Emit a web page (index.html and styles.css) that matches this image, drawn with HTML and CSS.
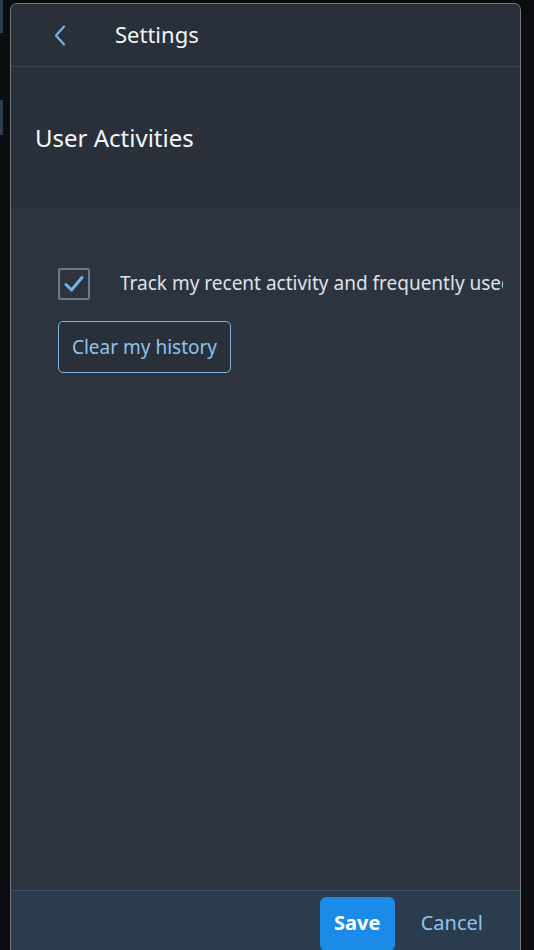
FILE: index.html
```html
<!DOCTYPE html>
<html lang="en">
<head>
    <meta charset="UTF-8">
    <meta name="viewport" content="width=device-width, initial-scale=1.0">
    <title>Settings</title>
    <link rel="stylesheet" href="styles.css">
</head>
<body>

<div class="side-strip">
    <span class="strip-bar top"></span>
    <span class="strip-bar mid"></span>
</div>

<div class="dialog">
    <div class="dialog-header">
        <button class="back-btn" aria-label="Back">
            <svg width="12" height="21" viewBox="0 0 12 21">
                <path d="M10 1.5 L2 10.5 L10 19.5" fill="none" stroke="#6cb4ee" stroke-width="2.2" stroke-linecap="round" stroke-linejoin="round"/>
            </svg>
        </button>
        <h1 class="title">Settings</h1>
    </div>

    <div class="section-header">
        <h2>User Activities</h2>
    </div>

    <div class="content">
        <div class="check-row">
            <span class="checkbox">
                <svg width="22" height="18" viewBox="0 0 22 18">
                    <path d="M3 9.5 L8.5 15 L19 2.5" fill="none" stroke="#6cb4ee" stroke-width="3" stroke-linecap="round" stroke-linejoin="round"/>
                </svg>
            </span>
            <span class="check-label">Track my recent activity and frequently used apps</span>
        </div>
        <button class="outline-btn">Clear my history</button>
    </div>

    <div class="footer">
        <button class="save-btn">Save</button>
        <button class="cancel-btn">Cancel</button>
    </div>
</div>

</body>
</html>
```

FILE: styles.css
```css
html, body {
    height: 100%;
}
body {
    margin: 0;
    background-color: #0b0d10;
    font-family: "Noto Sans", "Open Sans", sans-serif;
    display: flex;
    overflow: hidden;
}
.side-strip {
    width: 3px;
    margin-right: 7px;
    display: flex;
    flex-direction: column;
}
.strip-bar {
    display: block;
    background-color: #2c3e50;
}
.strip-bar.top {
    height: 33px;
}
.strip-bar.mid {
    height: 35px;
    margin-top: 67px;
}
.dialog {
    width: 509px;
    height: 980px;
    margin-top: 3px;
    border: 1px solid #76797c;
    border-bottom: none;
    border-radius: 7px 7px 0 0;
    background-color: #2d343f;
    display: flex;
    flex-direction: column;
    overflow: hidden;
}
.dialog-header {
    height: 62px;
    flex-shrink: 0;
    background-color: #29303a;
    border-bottom: 1px solid #3b4550;
    display: flex;
    align-items: center;
}
.back-btn {
    background: none;
    border: none;
    padding: 0;
    margin-left: 42px;
    width: 14px;
    height: 22px;
    display: flex;
    align-items: center;
    justify-content: center;
    cursor: pointer;
}
.title {
    margin: 0 0 2px 48px;
    font-size: 22px;
    font-weight: 400;
    color: #f4f6f8;
}
.section-header {
    height: 140px;
    flex-shrink: 0;
    background-color: #29303a;
    display: flex;
    align-items: center;
}
.section-header h2 {
    margin: 0 0 0 24px;
    font-size: 24px;
    font-weight: 400;
    color: #f4f6f8;
}
.content {
    height: 683px;
    flex-shrink: 0;
    padding: 61px 16px 0 47px;
    box-sizing: border-box;
    overflow: hidden;
}
.check-row {
    display: flex;
    align-items: center;
    white-space: nowrap;
    width: 445px;
    overflow: hidden;
}
.checkbox {
    width: 28px;
    height: 28px;
    border: 2px solid #6b7b8b;
    border-radius: 3px;
    display: flex;
    align-items: center;
    justify-content: center;
    flex-shrink: 0;
}
.check-label {
    margin-left: 30px;
    font-size: 19px;
    color: #dde2e7;
    padding-bottom: 2px;
}
.outline-btn {
    margin-top: 21px;
    width: 173px;
    height: 52px;
    background-color: #29303a;
    border: 1px solid #7ab6e2;
    border-radius: 5px;
    color: #8cc3ee;
    font-family: inherit;
    font-size: 19px;
    padding: 0;
    cursor: pointer;
}
.footer {
    flex: 1;
    background-color: #2b3c4f;
    border-top: 1px solid #3d5166;
    display: flex;
    align-items: flex-start;
    justify-content: flex-end;
    padding: 6px 37px 0 0;
}
.save-btn {
    width: 75px;
    height: 54px;
    background-color: #1b8be8;
    border: none;
    border-radius: 6px;
    color: white;
    font-family: inherit;
    font-size: 20px;
    font-weight: 700;
    padding: 0 0 4px;
    cursor: pointer;
}
.cancel-btn {
    margin-left: 26px;
    height: 54px;
    background: none;
    border: none;
    color: #8cc3ee;
    font-family: inherit;
    font-size: 20px;
    padding: 0 0 4px;
    cursor: pointer;
}
```
